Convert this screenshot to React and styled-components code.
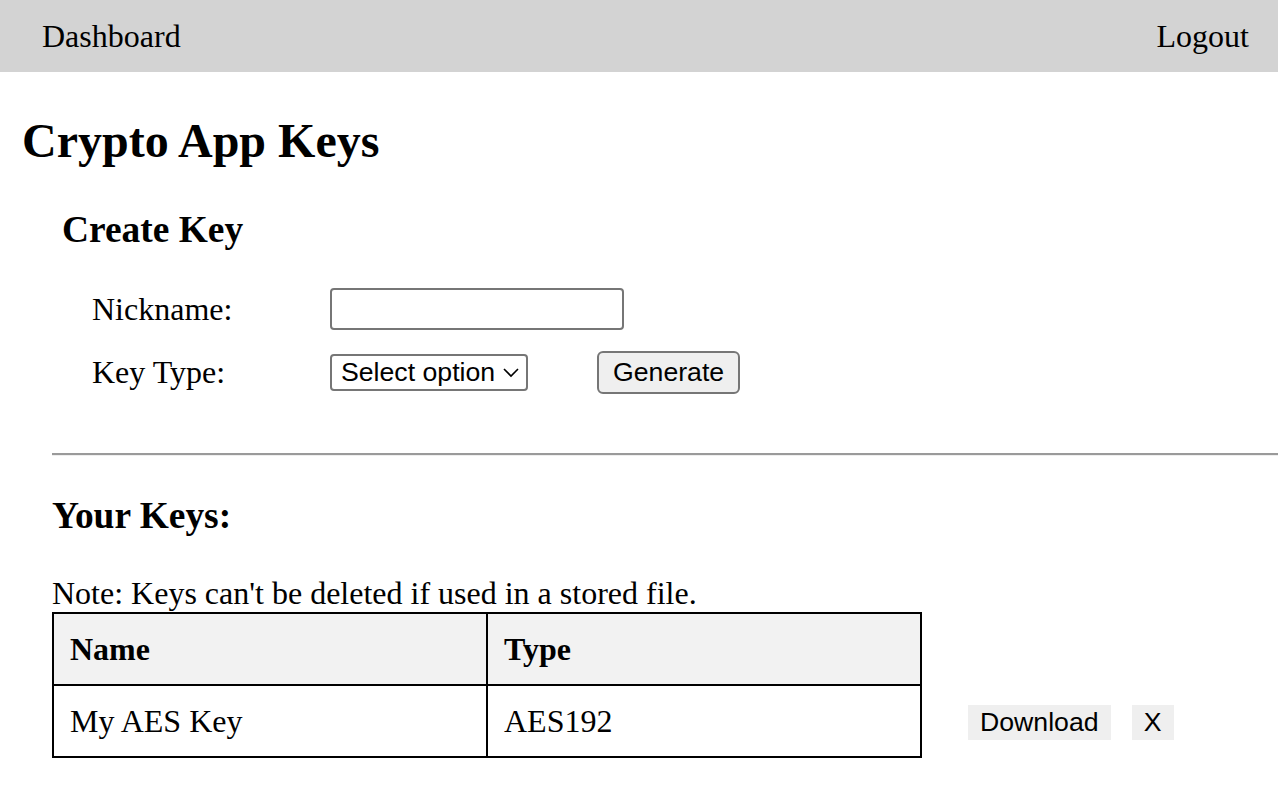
import React from "react";
import styled, { createGlobalStyle } from "styled-components";

const GlobalStyle = createGlobalStyle`
  html, body {
    margin: 0;
    padding: 0;
    background: #ffffff;
    color: #000000;
    font-family: "Liberation Serif", "Times New Roman", serif;
    font-size: 32px;
  }
  * { box-sizing: border-box; }
`;

const NavBar = styled.nav`
  height: 72px;
  background: #d3d3d3;
  display: flex;
  align-items: center;
  justify-content: space-between;
  padding: 0 29px 0 42px;
  font-size: 32px;
  line-height: 37px;
`;

const NavLink = styled.a`
  color: #000;
  text-decoration: none;
  cursor: pointer;
`;

const Main = styled.main`
  padding-left: 22px;
`;

const Title = styled.h1`
  margin: 42px 0 0 0;
  font-size: 48px;
  line-height: 54px;
  font-weight: bold;
`;

const SubTitle = styled.h3`
  margin: ${(p) => p.$mt || 0}px 0 0 0;
  font-size: 37.44px;
  line-height: 43px;
  font-weight: bold;
`;

const CreateSection = styled.section`
  padding-left: 40px;
`;

const Form = styled.form`
  margin-top: 37px;
  padding-left: 30px;
  display: flex;
  flex-direction: column;
  gap: 21px;
`;

const FormRow = styled.div`
  display: flex;
  align-items: center;
  height: 42px;
`;

const Label = styled.label`
  width: 238px;
  flex: none;
  font-size: 32px;
  line-height: 37px;
`;

const TextInput = styled.input`
  width: 294px;
  height: 42px;
  border: 2px solid #767676;
  border-radius: 4px;
  padding: 2px 6px;
  font-family: "Liberation Sans", Arial, sans-serif;
  font-size: 26.67px;
  background: #fff;
  outline: none;
`;

const SelectBox = styled.div`
  width: 198px;
  height: 37px;
  border: 2px solid #767676;
  border-radius: 4px;
  display: flex;
  align-items: center;
  justify-content: space-between;
  padding: 0 6px 0 9px;
  font-family: "Liberation Sans", Arial, sans-serif;
  font-size: 26.67px;
  background: #fff;
  cursor: default;
`;

const Chevron = styled.svg`
  width: 18px;
  height: 12px;
  flex: none;
`;

const Button = styled.button`
  margin-left: ${(p) => p.$ml || 0}px;
  min-width: ${(p) => p.$minW || 0}px;
  height: ${(p) => (p.$plain ? 35 : 43)}px;
  padding: 0 ${(p) => (p.$plain ? 12 : 14)}px;
  font-family: "Liberation Sans", Arial, sans-serif;
  font-size: 26.67px;
  color: #000;
  background: #efefef;
  border: ${(p) => (p.$plain ? "none" : "2px solid #767676")};
  border-radius: ${(p) => (p.$plain ? 0 : 6)}px;
  cursor: pointer;
  flex: none;
`;

const Divider = styled.hr`
  margin: 60px 0 0 30px;
  height: 0;
  border: none;
  border-top: 2px solid #9a9a9a;
  border-bottom: 1px solid #eeeeee;
`;

const KeysSection = styled.section`
  padding-left: 30px;
`;

const Note = styled.p`
  margin: 38px 0 0 0;
  font-size: 32px;
  line-height: 37px;
`;

const Table = styled.table`
  border-collapse: collapse;
  font-size: 32px;
`;

const HeadCell = styled.th`
  width: ${(p) => p.$w}px;
  height: 72px;
  padding: 0 16px;
  text-align: left;
  font-weight: bold;
  background: #f2f2f2;
  border: 2px solid #000;
`;

const Cell = styled.td`
  height: 72px;
  padding: 0 16px;
  text-align: left;
  border: 2px solid #000;
`;

const BareCell = styled.td`
  border: none;
  padding: 0 0 0 46px;
  white-space: nowrap;
`;

const BareHead = styled.th`
  border: none;
  background: transparent;
`;

const keys = [{ name: "My AES Key", type: "AES192" }];

export default function App() {
  return (
    <>
      <GlobalStyle />
      <NavBar>
        <NavLink>Dashboard</NavLink>
        <NavLink>Logout</NavLink>
      </NavBar>
      <Main>
        <Title>Crypto App Keys</Title>
        <CreateSection>
          <SubTitle $mt={40}>Create Key</SubTitle>
          <Form onSubmit={(e) => e.preventDefault()}>
            <FormRow>
              <Label>Nickname:</Label>
              <TextInput type="text" />
            </FormRow>
            <FormRow>
              <Label>Key Type:</Label>
              <SelectBox>
                <span>Select option</span>
                <Chevron viewBox="0 0 18 12">
                  <path d="M2 3 L9 10 L16 3" fill="none" stroke="#000" strokeWidth="1.6" />
                </Chevron>
              </SelectBox>
              <Button type="button" $ml={69}>Generate</Button>
            </FormRow>
          </Form>
        </CreateSection>
        <Divider />
        <KeysSection>
          <SubTitle $mt={38}>Your Keys:</SubTitle>
          <Note>Note: Keys can't be deleted if used in a stored file.</Note>
          <Table>
            <thead>
              <tr>
                <HeadCell $w={434}>Name</HeadCell>
                <HeadCell $w={434}>Type</HeadCell>
                <BareHead />
              </tr>
            </thead>
            <tbody>
              {keys.map((k) => (
                <tr key={k.name}>
                  <Cell>{k.name}</Cell>
                  <Cell>{k.type}</Cell>
                  <BareCell>
                    <Button type="button" $plain>Download</Button>
                    <Button type="button" $plain $ml={21} $minW={42}>X</Button>
                  </BareCell>
                </tr>
              ))}
            </tbody>
          </Table>
        </KeysSection>
      </Main>
    </>
  );
}
